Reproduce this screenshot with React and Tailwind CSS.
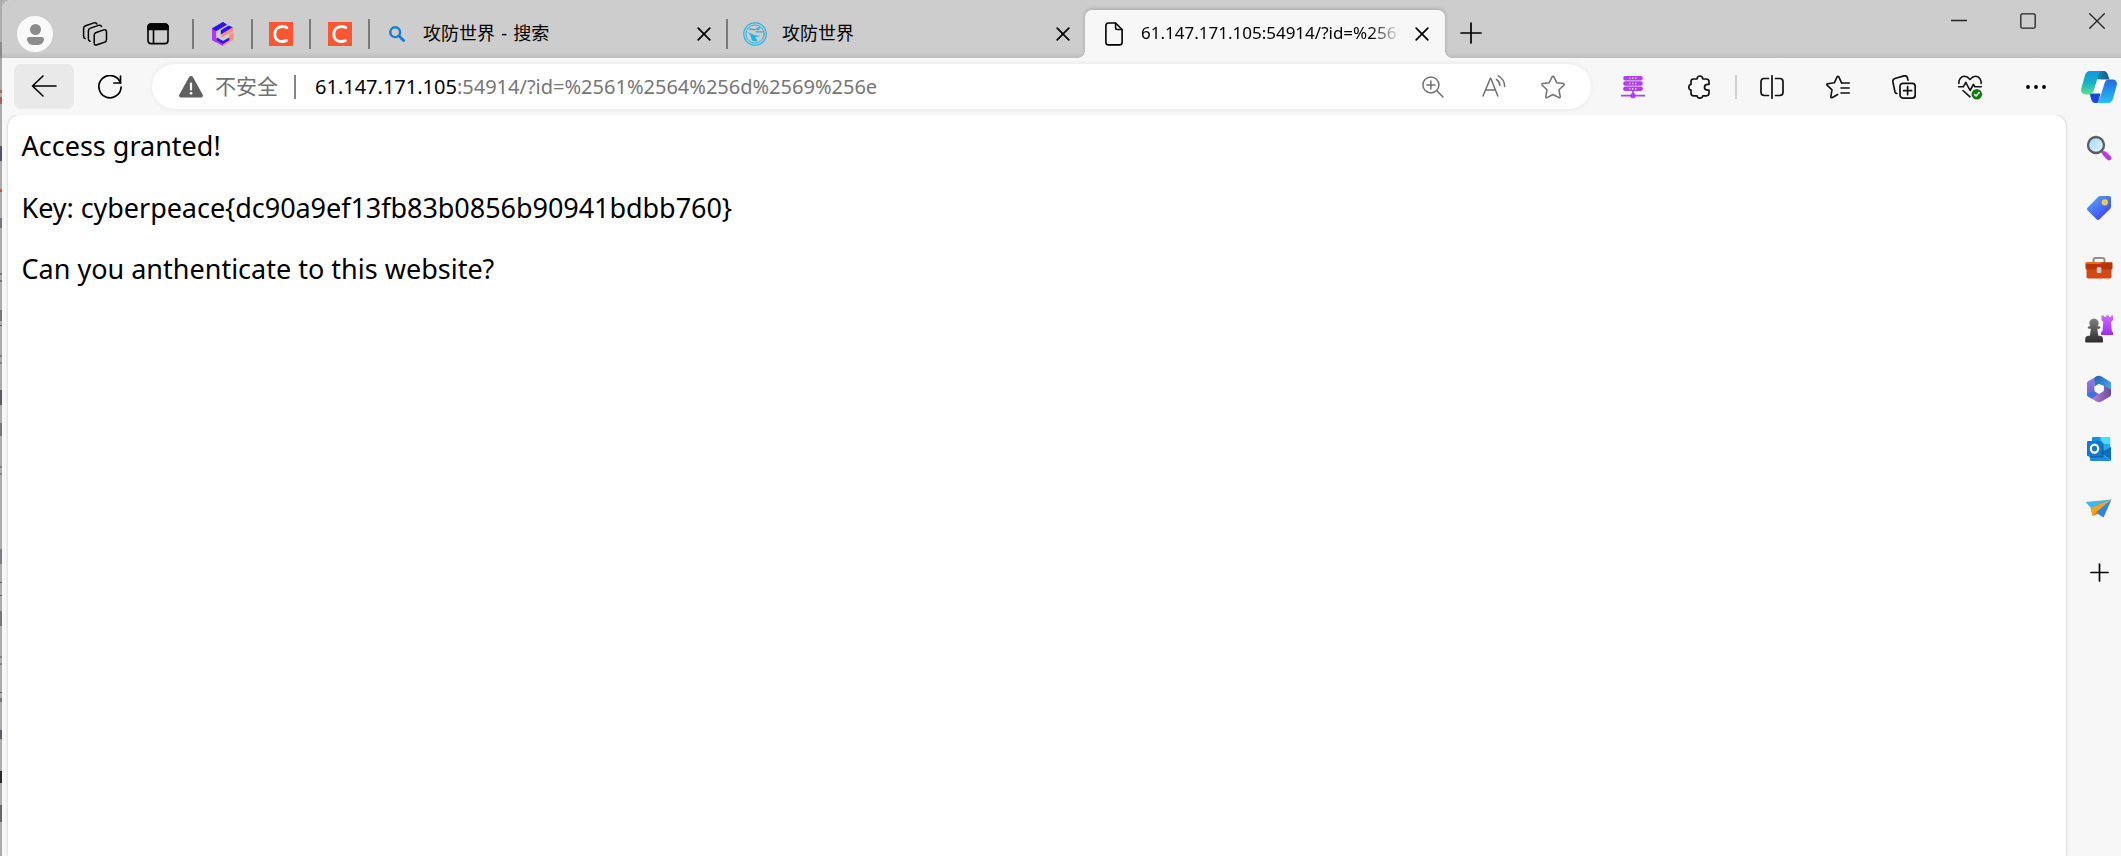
import React from 'react';

const Svg = ({ w = 24, h = 24, children, className = '', sw = 1.6 }) => (
  <svg
    width={w}
    height={h}
    viewBox={`0 0 ${w} ${h}`}
    fill="none"
    stroke="currentColor"
    strokeWidth={sw}
    strokeLinecap="round"
    strokeLinejoin="round"
    className={'block shrink-0 ' + className}
  >
    {children}
  </svg>
);

/* ---------- tab strip icons ---------- */

const WorkspacesIcon = () => (
  <Svg sw={1.5} className="overflow-visible">
    <path d="M11.200 13.200c0-1.500.6-2.300 2-2.700l7.600-2.600c1.700-.5 2.700.2 2.700 1.900v7.600c0 1.500-.6 2.400-2 2.900L14 22.800c-1.700.6-2.800-.1-2.800-1.800z" />
    <path d="M7 19.300c-1.100-.4-1.600-1.100-1.600-2.300V8.800c0-1.400.6-2.200 2-2.700l8.200-2.700c1.400-.4 2.500 0 2.900 1.100" />
    <path d="M2.200 16.600C1.100 16.200.6 15.500.6 14.300V6.400c0-1.400.6-2.200 2-2.700L11 .9c1.400-.4 2.500 0 2.900 1.100" />
  </Svg>
);

const TabActionsIcon = () => (
  <Svg w={22} h={22} sw={1.6}>
    <rect x="1" y="1" width="20" height="19.600" rx="3.200" />
    <path d="M1 6.400V4.200C1 2.400 2.400 1 4.200 1h13.600C19.600 1 21 2.400 21 4.200v2.200z" fill="currentColor" />
    <path d="M6.500 6v14.500" />
  </Svg>
);

const GitCodeIcon = () => (
  <Svg w={22} h={24} sw={0}>
    <path d="M11 0 0 6.500v11.500l4 2.300V9.200L14.500 3z" fill="#6a2cf5" />
    <path d="M0 7v11l11 6v-4.500L4.200 15.800V9z" fill="#b635ef" />
    <path d="M11 0l4 2.400L4.200 9 0 6.500z" fill="#2d12ef" />
    <path d="M11 24l10.500-6.200V10l-4.200 2.500v3.200L11 19.300z" fill="#f58e7b" />
    <path d="M20.800 5 9.500 11.500v4L21.500 9z" fill="#f58e7b" />
    <path d="M16.500 3.500 8.800 8.300v4.200l12-7.200z" fill="#2b12f2" />
    <path d="M5 15.500l6 3.600 6.300-3.600v2.700L11 22l-6-3.600z" fill="#2b12f2" />
  </Svg>
);

const CIcon = () => (
  <Svg className="bg-[#fc5531] text-white" sw={2.900}>
    <path d="M17.800 5.600C16.600 4.800 15.200 4.500 13.500 4.500c-4.700 0-7.700 3.400-7.700 7.800 0 4.300 2.700 7.200 7 7.200 1.700 0 3.200-.3 4.500-.9" />
  </Svg>
);

const BlueSearchIcon = () => (
  <Svg w={16} h={16} sw={2.400} className="text-[#1a7bd3]">
    <circle cx="6.200" cy="6.200" r="4.900" />
    <path d="M10 10l4.600 4.600" strokeWidth="2.800" />
  </Svg>
);

const XctfIcon = () => (
  <Svg sw={1.200} className="text-[#1eb2e6]">
    <circle cx="12" cy="12" r="11.200" strokeDasharray="2.400 .8" />
    <circle cx="12" cy="12" r="9.100" strokeWidth="1" />
    <path d="M6.500 7.300c2.300-.6 4 .8 6 .2L16.500 5M13 9.800h6.500M14.500 7.800l2.500-1" />
    <path d="M5.500 10.800c1.600 0 2.100 1 4.100 1.700 2 .7 4.500 1.600 7 1.300l-4.600 1.500 2.500 3.200c-1.800 1.100-4.200.8-5.500-.3-1-2.300-.4-4-3.500-7.400z" fill="currentColor" strokeWidth=".3" />
  </Svg>
);

const CloseIcon = () => (
  <Svg w={14} h={14} sw={1.700}>
    <path d="M1.200 1.200l11.600 11.600M12.800 1.200L1.200 12.800" />
  </Svg>
);

const FileIcon = () => (
  <Svg w={18} h={24} sw={1.600}>
    <path d="M3.600 1h7l6.500 6.500v12.700c0 1.600-1 2.700-2.600 2.700H3.600C2 22.900.9 21.800.9 20.200V3.700C.9 2.100 2 1 3.600 1z" />
    <path d="M10.600 1.200v4.600c0 1 .7 1.700 1.700 1.700h4.600" />
  </Svg>
);

/* ---------- toolbar icons ---------- */

const BackIcon = () => (
  <Svg w={26} h={22} sw={1.600} className="text-black">
    <path d="M12 1 1.500 11 12 21M1.500 11H25" />
  </Svg>
);

const RefreshIcon = () => (
  <Svg sw={1.700} className="text-black">
    <path d="M22.500 8A11.100 11.100 0 1 0 23.100 12" />
    <path d="M22.500 1v7h-6.600" />
  </Svg>
);

const WarningIcon = () => (
  <Svg w={24} h={24} sw={0} className="text-[#606060]">
    <path d="M10.100 2.100c.9-1.600 2.900-1.600 3.800 0l9.700 17.300c.9 1.500-.1 3.200-1.900 3.200H2.300c-1.800 0-2.800-1.700-1.900-3.200z" fill="currentColor" />
    <path d="M12 8.500v6" stroke="#fff" strokeWidth="2.200" />
    <circle cx="12" cy="18.300" r="1.400" fill="#fff" />
  </Svg>
);

const ZoomInIcon = () => (
  <Svg w={22} h={22} sw={1.500}>
    <circle cx="8.900" cy="8.900" r="8" />
    <path d="M14.800 14.800 21 21M8.900 4.900v8M4.900 8.900h8" />
  </Svg>
);

const ReadAloudIcon = () => (
  <Svg sw={1.500}>
    <path d="M1 21 8.300 3.500h.6L15.800 21M3.500 15h10" />
    <path d="M14.500 4.500c2 1.200 3.200 3.200 3.400 6M16.200.9c3.800 2 6.300 5.600 6.500 10.600" />
  </Svg>
);

const StarIcon = () => (
  <Svg sw={1.500}>
    <path d="M11.200 1.700c.3-.7 1.300-.7 1.600 0l2.900 6 6.600.9c.8.1 1.100 1.100.5 1.600L18 14.800l1.200 6.900c.1.700-.6 1.300-1.300.9L12 19.500l-5.900 3.100c-.7.4-1.400-.2-1.300-.9L6 14.800l-4.800-4.600c-.6-.5-.3-1.500.5-1.600l6.600-.9z" />
  </Svg>
);

const ServerIcon = () => (
  <Svg sw={0} className="text-[#b43df0]">
    {[1, 6.300, 11.500].map((y) => (
      <g key={y}>
        <rect x="2.300" y={y} width="19.400" height="4.500" rx="1.700" fill="currentColor" />
        <path d={`M8 ${y + 2.200}h8`} stroke="#f3d6ff" strokeWidth="1.400" strokeDasharray="1.400 1.600" strokeLinecap="butt" />
      </g>
    ))}
    <path d="M12 16v3M0 20.700h24" stroke="currentColor" strokeWidth="1.700" strokeLinecap="butt" />
    <circle cx="12" cy="20.700" r="2.600" fill="currentColor" />
  </Svg>
);

const PuzzleIcon = () => (
  <Svg w={22} h={24} sw={1.700}>
    <path d="M5.500 4H9c.2-1.800 1.200-3 2.900-3s2.700 1.200 2.900 3h3.400c1.700 0 2.800 1 2.800 2.700v2.600h-1.300c-1.900 0-3.200 1.200-3.200 2.900s1.300 2.900 3.200 2.900H21v3c0 1.700-1 2.700-2.700 2.700h-3.500c-.2 1.500-1.300 2.400-2.900 2.400s-2.700-.9-2.900-2.400H5.600C4 20.800 3 19.800 3 18.200v-3c-1.400-.2-2.200-1.300-2.200-2.900S1.600 9.600 3 9.400V6.600C3 5 4 4 5.500 4z" />
  </Svg>
);

const SplitIcon = () => (
  <Svg sw={1.700}>
    <path d="M12 .8v22.400M8.500 3.500H4.200C2.200 3.500 1 4.700 1 6.700v10.600c0 2 1.200 3.200 3.200 3.200h4.300M15.500 3.500h4.300c2 0 3.200 1.200 3.200 3.200v10.600c0 2-1.200 3.200-3.200 3.200h-4.300" />
  </Svg>
);

const FavoritesIcon = () => (
  <Svg sw={1.600}>
    <path d="M15.600 7.900 12.700 1.700c-.3-.7-1.200-.7-1.500 0L8.300 7.800l-6.700.9c-.8.100-1 1-.5 1.500l4.900 4.600-1.200 7c-.1.700.6 1.200 1.200.9l5.700-3.200" />
    <path d="M15.600 8h7.600M15 13h8.200M15 18h8.200" />
  </Svg>
);

const CollectionsIcon = () => (
  <Svg sw={1.700}>
    <rect x="8" y="8.300" width="15.200" height="14.800" rx="3" />
    <path d="M15.600 11.700v8M11.600 15.700h8M4.900 18.500c-1.100-.1-1.700-.7-2-1.800L.9 6.900C.6 5.200 1.300 4 2.900 3.500L12 .9c1.700-.4 3 .3 3.400 1.900l.6 2.300" />
  </Svg>
);

const EssentialsIcon = () => (
  <Svg w={25} h={25} sw={1.600}>
    <path d="M.9 8.500C.5 4.500 3 1.300 6.400 1.300c2.300 0 4 1.300 5.600 3.200 1.600-1.900 3.300-3.200 5.600-3.200 3.400 0 5.900 3.200 5.500 7.200" />
    <path d="M.7 11.800h4.600l2.500-4.500 4.300 8.200 3.300-6 1.500 2.300h6.400M5 15.500l7 6.300" />
    <circle cx="18.800" cy="19.200" r="5.300" fill="#107c10" stroke="none" />
    <path d="M16.500 19.500l1.600 1.500 3.100-3.500" stroke="#fff" strokeWidth="1.500" />
  </Svg>
);

const DotsIcon = () => (
  <Svg w={22} h={6} sw={0} className="text-black">
    <circle cx="3" cy="3" r="1.900" fill="currentColor" />
    <circle cx="11" cy="3" r="1.900" fill="currentColor" />
    <circle cx="19" cy="3" r="1.900" fill="currentColor" />
  </Svg>
);

const CopilotIcon = () => (
  <Svg w={36} h={32} sw={0}>
    <defs>
      <linearGradient id="cpA" x1="0" y1="0" x2="0" y2="1">
        <stop offset="0" stopColor="#1795dc" />
        <stop offset=".5" stopColor="#12b2c6" />
        <stop offset="1" stopColor="#5fe08b" />
      </linearGradient>
      <linearGradient id="cpB" x1="0" y1="0" x2="0" y2="1">
        <stop offset="0" stopColor="#2667dc" />
        <stop offset="1" stopColor="#22c3fb" />
      </linearGradient>
      <linearGradient id="cpC" x1="0" y1="0" x2="1" y2="0">
        <stop offset="0" stopColor="#1396c6" />
        <stop offset="1" stopColor="#10587f" />
      </linearGradient>
    </defs>
    <path d="M16 8.500h9L20 23.400h-8z" fill="#fff" />
    <path d="M17 0h5.500c2.600 0 3.500 1.500 4.400 4l1.600 4.500h-8L14 8z" fill="url(#cpC)" />
    <path d="M8.500 22.500h11L17 32h-2.500c-2.500 0-3.600-1.500-4.400-4z" fill="#1746e0" />
    <path d="M9 0h12c-2 .5-2.800 2-3.600 4.500l-4.800 15.200c-.7 2.300-2 3.700-4.500 3.700H4.500C1 23.400-.6 21 .3 17.500L3.800 5C4.700 1.800 6.300 0 9 0z" fill="url(#cpA)" />
    <path d="M27 32H15.200c2-.5 2.900-2 3.600-4.500l4.700-15.200c.7-2.300 2-3.800 4.500-3.800h3.500c3.500 0 5.100 2.500 4.200 6L32.200 27c-.9 3.200-2.500 5-5.200 5z" fill="url(#cpB)" />
  </Svg>
);

/* ---------- sidebar icons ---------- */

const SideSearch = () => (
  <Svg w={26} h={26} sw={0}>
    <defs>
      <linearGradient id="lens" x1="0" y1="0" x2="1" y2="1">
        <stop offset="0" stopColor="#9fd6fb" />
        <stop offset="1" stopColor="#e6f5ff" />
      </linearGradient>
    </defs>
    <path d="M15.500 16l3 3" stroke="#777" strokeWidth="2.500" />
    <circle cx="10" cy="10" r="8" fill="url(#lens)" stroke="#5c5e60" strokeWidth="2.300" />
    <path d="M18.800 18.800l4.200 4.200" stroke="#bd38f5" strokeWidth="4.600" />
  </Svg>
);

const SideTag = () => (
  <Svg w={26} h={26} sw={0}>
    <defs>
      <linearGradient id="tag" x1="0" y1="0" x2=".8" y2="1">
        <stop offset=".1" stopColor="#57a4fb" />
        <stop offset="1" stopColor="#3c3bf0" />
      </linearGradient>
    </defs>
    <path d="M14.500 1H23c1.300 0 2 .8 2 2v8.500c0 1-.3 1.800-1 2.500L13.500 24.300c-1 .9-2 .9-3 0L1.700 15.500c-.9-1-.9-2 0-3L12 2c.7-.7 1.500-1 2.500-1z" fill="url(#tag)" />
    <circle cx="18.800" cy="7.300" r="2.400" fill="#b9bce8" stroke="#fcd02c" strokeWidth="1.500" />
  </Svg>
);

const SideTools = () => (
  <Svg w={28} h={24} sw={0}>
    <path d="M8.500 7V4.200c0-1.500.8-2.200 2.200-2.200h6.600c1.400 0 2.200.7 2.200 2.200V7" stroke="#8d8f91" strokeWidth="2" />
    <path d="M1.500 12h25v8.500c0 1.200-.7 2-2 2h-21c-1.300 0-2-.8-2-2z" fill="#d44a17" />
    <path d="M2 6.300h24c1 0 1.500.5 1.500 1.500v4.400c0 .8-.5 1.200-1.300 1.200H1.800c-.8 0-1.300-.4-1.300-1.200V7.800c0-1 .5-1.500 1.500-1.500z" fill="#b93509" />
    <path d="M1.500 7h14" stroke="#f27a1c" strokeWidth="1.300" />
    <rect x="11.800" y="11.300" width="4.500" height="5.600" rx="1" fill="#c7cbce" />
  </Svg>
);

const SideGames = () => (
  <Svg w={28} h={28} sw={0}>
    <defs>
      <linearGradient id="pawn" x1="0" y1="0" x2="0" y2="1">
        <stop offset="0" stopColor="#808080" />
        <stop offset="1" stopColor="#2c2c2c" />
      </linearGradient>
      <linearGradient id="rook" x1="0" y1="0" x2="0" y2="1">
        <stop offset="0" stopColor="#cc6bff" />
        <stop offset="1" stopColor="#a228ef" />
      </linearGradient>
    </defs>
    <path d="M16.500.5H19V2h2V.5h3V2h2V.5h2v4.700l-2 1.800.8 9 1.200 1.500v2.500H16v-2.500l1.500-1.500.8-9-1.800-1.800z" fill="url(#rook)" />
    <path d="M9 3.500a4.700 4.700 0 0 1 3.500 7.800h1.800c1.500 0 1.500 2.500 0 2.500h-2l1 7h1.500c2 0 3.200 1.500 3.200 3.500v2.200c0 .5-.4 1-1 1H1.200c-.6 0-1-.5-1-1v-2.200c0-2 1.200-3.500 3.200-3.500h1.500l1-7h-2c-1.500 0-1.500-2.500 0-2.500h1.600A4.700 4.700 0 0 1 9 3.500z" fill="url(#pawn)" />
  </Svg>
);

const SideM365 = () => (
  <Svg w={26} h={28} sw={0}>
    <defs>
      <linearGradient id="ma" x1="0" y1="0" x2="0" y2="1">
        <stop offset="0" stopColor="#a578da" />
        <stop offset="1" stopColor="#5a67d5" />
      </linearGradient>
      <linearGradient id="mb" x1="0" y1="0" x2="1" y2="1">
        <stop offset="0" stopColor="#205fb4" />
        <stop offset="1" stopColor="#4bb7f2" />
      </linearGradient>
      <linearGradient id="mc" x1="0" y1="0" x2="1" y2="0">
        <stop offset="0" stopColor="#c285e4" />
        <stop offset="1" stopColor="#674a9e" />
      </linearGradient>
    </defs>
    <path d="M11 1 2.500 6C1.300 6.700 1 7.500 1 8.700v10.500c0 1.200.5 2 1.500 2.600l3 1.700c2 1 3.800.2 5-1.500L13 18.500 8.500 15V7z" fill="url(#ma)" />
    <path d="M9.500 2C11.500.8 13.500.4 15.500 1.500l8 4.700c1 .6 1.500 1.500 1.500 2.600V18l-7-4v-3l-5-2-4.500 2.500V4.500c0-1 .3-2 1-2.500z" fill="url(#mb)" />
    <path d="M25 14v5.200c0 1.200-.5 2-1.500 2.600l-8 4.700c-1.700 1-3.300 1-5 0L4 22.700c3 .8 5-.5 6.500-3l2.500-1.500 5-3v-4.500l5 2.800z" fill="url(#mc)" />
    <path d="M1 19.200c0 1.200.5 2 1.500 2.600 4 1.700 6.500 0 8-2.800L8.200 15.500z" fill="#3f71da" />
    <path d="M13 9.200l4.300 2.500v4.800L13 19l-4.300-2.500v-4.800z" fill="#fff" />
  </Svg>
);

const SideOutlook = () => (
  <Svg w={26} h={26} sw={0}>
    <rect x="6" y="1" width="18" height="16" rx="1.200" fill="#1490df" />
    <path d="M14.500 1H23c.7 0 1.200.5 1.200 1.200V8h-9.700z" fill="#50d9ff" />
    <path d="M14.500 8h9.700v6h-9.700z" fill="#28a8ea" />
    <path d="M4 14.500l12 1 9-4.500v12.500c0 .8-.6 1.500-1.400 1.500H5.400C4.600 25 4 24.300 4 23.500z" fill="#1a8ddb" />
    <path d="M25 11 15 17l10 7.300z" fill="#0f6fbd" />
    <path d="M15 17l9.500 7.500" stroke="#35b8f1" strokeWidth="1" />
    <rect x="3" y="6.500" width="14.500" height="15" rx="1.200" fill="#0a4a86" opacity=".65" />
    <rect x="1" y="5" width="15" height="15.200" rx="1.200" fill="#0f78d4" />
    <ellipse cx="8.500" cy="12.600" rx="3.700" ry="4" stroke="#fff" strokeWidth="2.200" />
  </Svg>
);

const SidePlane = () => (
  <Svg w={28} h={20} sw={0}>
    <path d="M.5 3 26.500.5 9 12.500z" fill="#45b3ef" />
    <path d="M26.500.5 18.500 18.500 12.500 14.800 7.500 12z" fill="#2c83e8" />
    <path d="M26.500.5 5.500 9l2 8.200 3.500-3.700z" fill="#f0a31c" />
    <path d="M7.500 17.200 12 12l2.200 1.900z" fill="#c97a12" />
  </Svg>
);

const PlusIcon = ({ s = 22 }) => (
  <Svg w={s} h={s} sw={1.700} className="text-black">
    <path d={`M${s / 2} 1v${s - 2}M1 ${s / 2}h${s - 2}`} />
  </Svg>
);

const sideItems = [SideSearch, SideTag, SideTools, SideGames, SideM365, SideOutlook, SidePlane];

// slivers of the window behind, [y, height, colour]
const slivers = [
  [42, 16, '#8b8b8b'],
  [90, 3, '#a46f52'],
  [97, 7, '#9a6a58'],
  [146, 15, '#4a5578'],
  [189, 3, '#c4574a'],
  [218, 10, '#77777d'],
  [273, 2, '#76767e'],
  [280, 2, '#76767e'],
  [310, 11, '#77777b'],
  [325, 1, '#5a5a5e'],
  [355, 2, '#80808a'],
  [362, 2, '#80808a'],
  [390, 15, '#5a5c62'],
  [423, 13, '#77777b'],
  [466, 2, '#80808a'],
  [473, 2, '#80808a'],
  [549, 15, '#7d7d84'],
  [582, 1, '#5a5a5e'],
  [595, 1, '#5a5a5e'],
  [611, 15, '#77777b'],
  [656, 2, '#80808a'],
  [663, 2, '#80808a'],
  [692, 1, '#5a5a5e'],
  [698, 4, '#77777b'],
  [730, 9, '#5a5c62'],
  [771, 12, '#2a2a2c'],
  [805, 17, '#66666b'],
];

const Sep = ({ className = '' }) => <div className={'h-[30px] w-[2px] shrink-0 bg-[#7b7b7b] ' + className} />;

function TabStrip() {
  return (
    <header className="flex h-[58px] bg-linear-to-b from-[#cdcdcd] from-90% to-[#bdbdbd]">
      <div className="flex h-[48px] items-center pt-5">
        <div className="ml-[15px] flex size-9 flex-col items-center justify-center rounded-full bg-[#f9f9f9]">
          <span className="size-[11px] rounded-full bg-[#8c8c8c]" />
          <span className="mt-[2px] h-[8px] w-[17px] rounded-t-[3px] rounded-b-[8px] bg-[#8c8c8c]" />
        </div>
        <div className="ml-[30px]"><WorkspacesIcon /></div>
        <div className="ml-10"><TabActionsIcon /></div>
        <Sep className="ml-[23px]" />
        <div className="ml-[18px]"><GitCodeIcon /></div>
        <Sep className="ml-[17px]" />
        <div className="ml-4"><CIcon /></div>
        <Sep className="ml-4" />
        <div className="ml-[17px]"><CIcon /></div>
        <Sep className="ml-4" />
        <div className="flex w-[356px] items-center pl-[19px]">
          <BlueSearchIcon />
          <span className="ml-[18px] flex-1 pb-[2px] whitespace-nowrap [word-spacing:1.5px]">攻防世界 - 搜索</span>
          <CloseIcon />
          <span className="w-[15px]" />
        </div>
        <Sep />
        <div className="flex w-[357px] items-center pl-[15px]">
          <XctfIcon />
          <span className="ml-[15px] flex-1 pb-[2px] whitespace-nowrap">攻防世界</span>
          <CloseIcon />
          <span className="w-[15px]" />
        </div>
      </div>

      <div className="relative mt-[10px] flex h-12 w-[360px] items-center rounded-t-[7px] bg-[#f7f7f7] pl-5 shadow-[0_-1px_4px_rgba(0,0,0,0.2)]">
        <FileIcon />
        <span className="ml-[18px] w-[260px] overflow-hidden pb-[2px] text-[17px] whitespace-nowrap [mask-image:linear-gradient(to_right,black_88%,transparent_100%)]">
          61.147.171.105:54914/?id=%2561
        </span>
        <span className="ml-[14px]"><CloseIcon /></span>
        <span className="absolute bottom-0 -left-[7px] size-[7px] bg-[radial-gradient(circle_at_top_left,transparent_6.500px,#f7f7f7_7px)]" />
        <span className="absolute bottom-0 -right-[7px] size-[7px] bg-[radial-gradient(circle_at_top_right,transparent_6.500px,#f7f7f7_7px)]" />
      </div>

      <div className="mt-[22px] ml-[15px]"><PlusIcon /></div>

      <div className="mr-4 ml-auto flex h-[42px] items-center gap-[53px] text-[#222]">
        <Svg w={16} h={16} sw={1.300}><path d="M0 7.500h16" /></Svg>
        <Svg w={16} h={16} sw={1.300}><rect x=".8" y=".8" width="14.400" height="14.400" rx="1.500" /></Svg>
        <Svg w={16} h={16} sw={1.300}><path d="M.7.7l14.600 14.600M15.300.7.7 15.300" /></Svg>
      </div>
    </header>
  );
}

function Toolbar() {
  return (
    <div className="relative flex h-[57px] items-center bg-[#f7f7f7]">
      <div className="ml-3 flex h-[45px] w-[60px] items-center justify-center rounded-[7px] bg-[#e9e9e9] pb-[2px]">
        <BackIcon />
      </div>
      <div className="ml-6"><RefreshIcon /></div>

      <div className="ml-[30px] flex h-[45px] w-[1439px] items-center rounded-full bg-white pl-[27px] text-[#707070] shadow-[0_0_5px_rgba(0,0,0,0.08)]">
        <WarningIcon />
        <span className="ml-3 text-[21px] leading-none">不安全</span>
        <span className="ml-4 h-6 w-[2px] bg-[#858585]" />
        <span className="ml-[19px] flex-1 whitespace-nowrap text-[20px] text-[#767676]">
          <span className="text-black">61.147.171.105</span>:54914/?id=%2561%2564%256d%2569%256e
        </span>
        <ZoomInIcon />
        <span className="ml-[38px]"><ReadAloudIcon /></span>
        <span className="mr-[26px] ml-[35px]"><StarIcon /></span>
      </div>

      <div className="ml-[9px] flex items-center text-[#111]">
        <div className="flex w-[66px] justify-center"><ServerIcon /></div>
        <div className="flex w-[66px] justify-center"><PuzzleIcon /></div>
        <span className="ml-[3px] h-6 w-[2px] bg-[#cfcfcf]" />
        <div className="flex w-[70px] justify-center"><SplitIcon /></div>
        <div className="flex w-[62px] justify-center"><FavoritesIcon /></div>
        <div className="flex w-[70px] justify-center"><CollectionsIcon /></div>
        <div className="flex w-[62px] justify-center pt-[2px]"><EssentialsIcon /></div>
        <div className="flex w-[70px] justify-center"><DotsIcon /></div>
      </div>
      <div className="mr-1 ml-auto"><CopilotIcon /></div>
    </div>
  );
}

export default function App() {
  return (
    <div className="flex h-[856px] w-[2121px] overflow-hidden bg-[#b3b3b3] font-['Noto_Sans','Noto_Sans_CJK_SC',sans-serif] text-[18px] text-black">
      <svg width="2" height="856" className="shrink-0">
        <rect width="2" height="856" fill="#acacac" />
        {slivers.map(([y, h, c]) => (
          <rect key={y} y={y} width="2" height={h} fill={c} />
        ))}
      </svg>

      <div className="flex min-w-0 flex-1 flex-col overflow-hidden rounded-tl-[9px] bg-[#f7f7f7]">
        <TabStrip />
        <Toolbar />
        <div className="flex min-h-0 flex-1">
          <main className="ml-[6px] w-[2058px] rounded-t-[12px] bg-white pt-[12px] pl-[13.500px] text-[27px] leading-[37px] shadow-[0_0_3px_rgba(0,0,0,0.22)]">
            <p className="mb-[24.500px]">Access granted!</p>
            <p className="mb-[24.500px] tracking-[-0.05px]">Key: cyberpeace&#123;dc90a9ef13fb83b0856b90941bdbb760&#125;</p>
            <p>Can you anthenticate to this website?</p>
          </main>
          <aside className="flex flex-1 flex-col items-center pt-[3px] pl-[11px]">
            {sideItems.map((Item, i) => (
              <div key={i} className="flex h-[60.200px] items-center">
                <Item />
              </div>
            ))}
            <div className="mt-[24px]"><PlusIcon s={19} /></div>
          </aside>
        </div>
      </div>
    </div>
  );
}
